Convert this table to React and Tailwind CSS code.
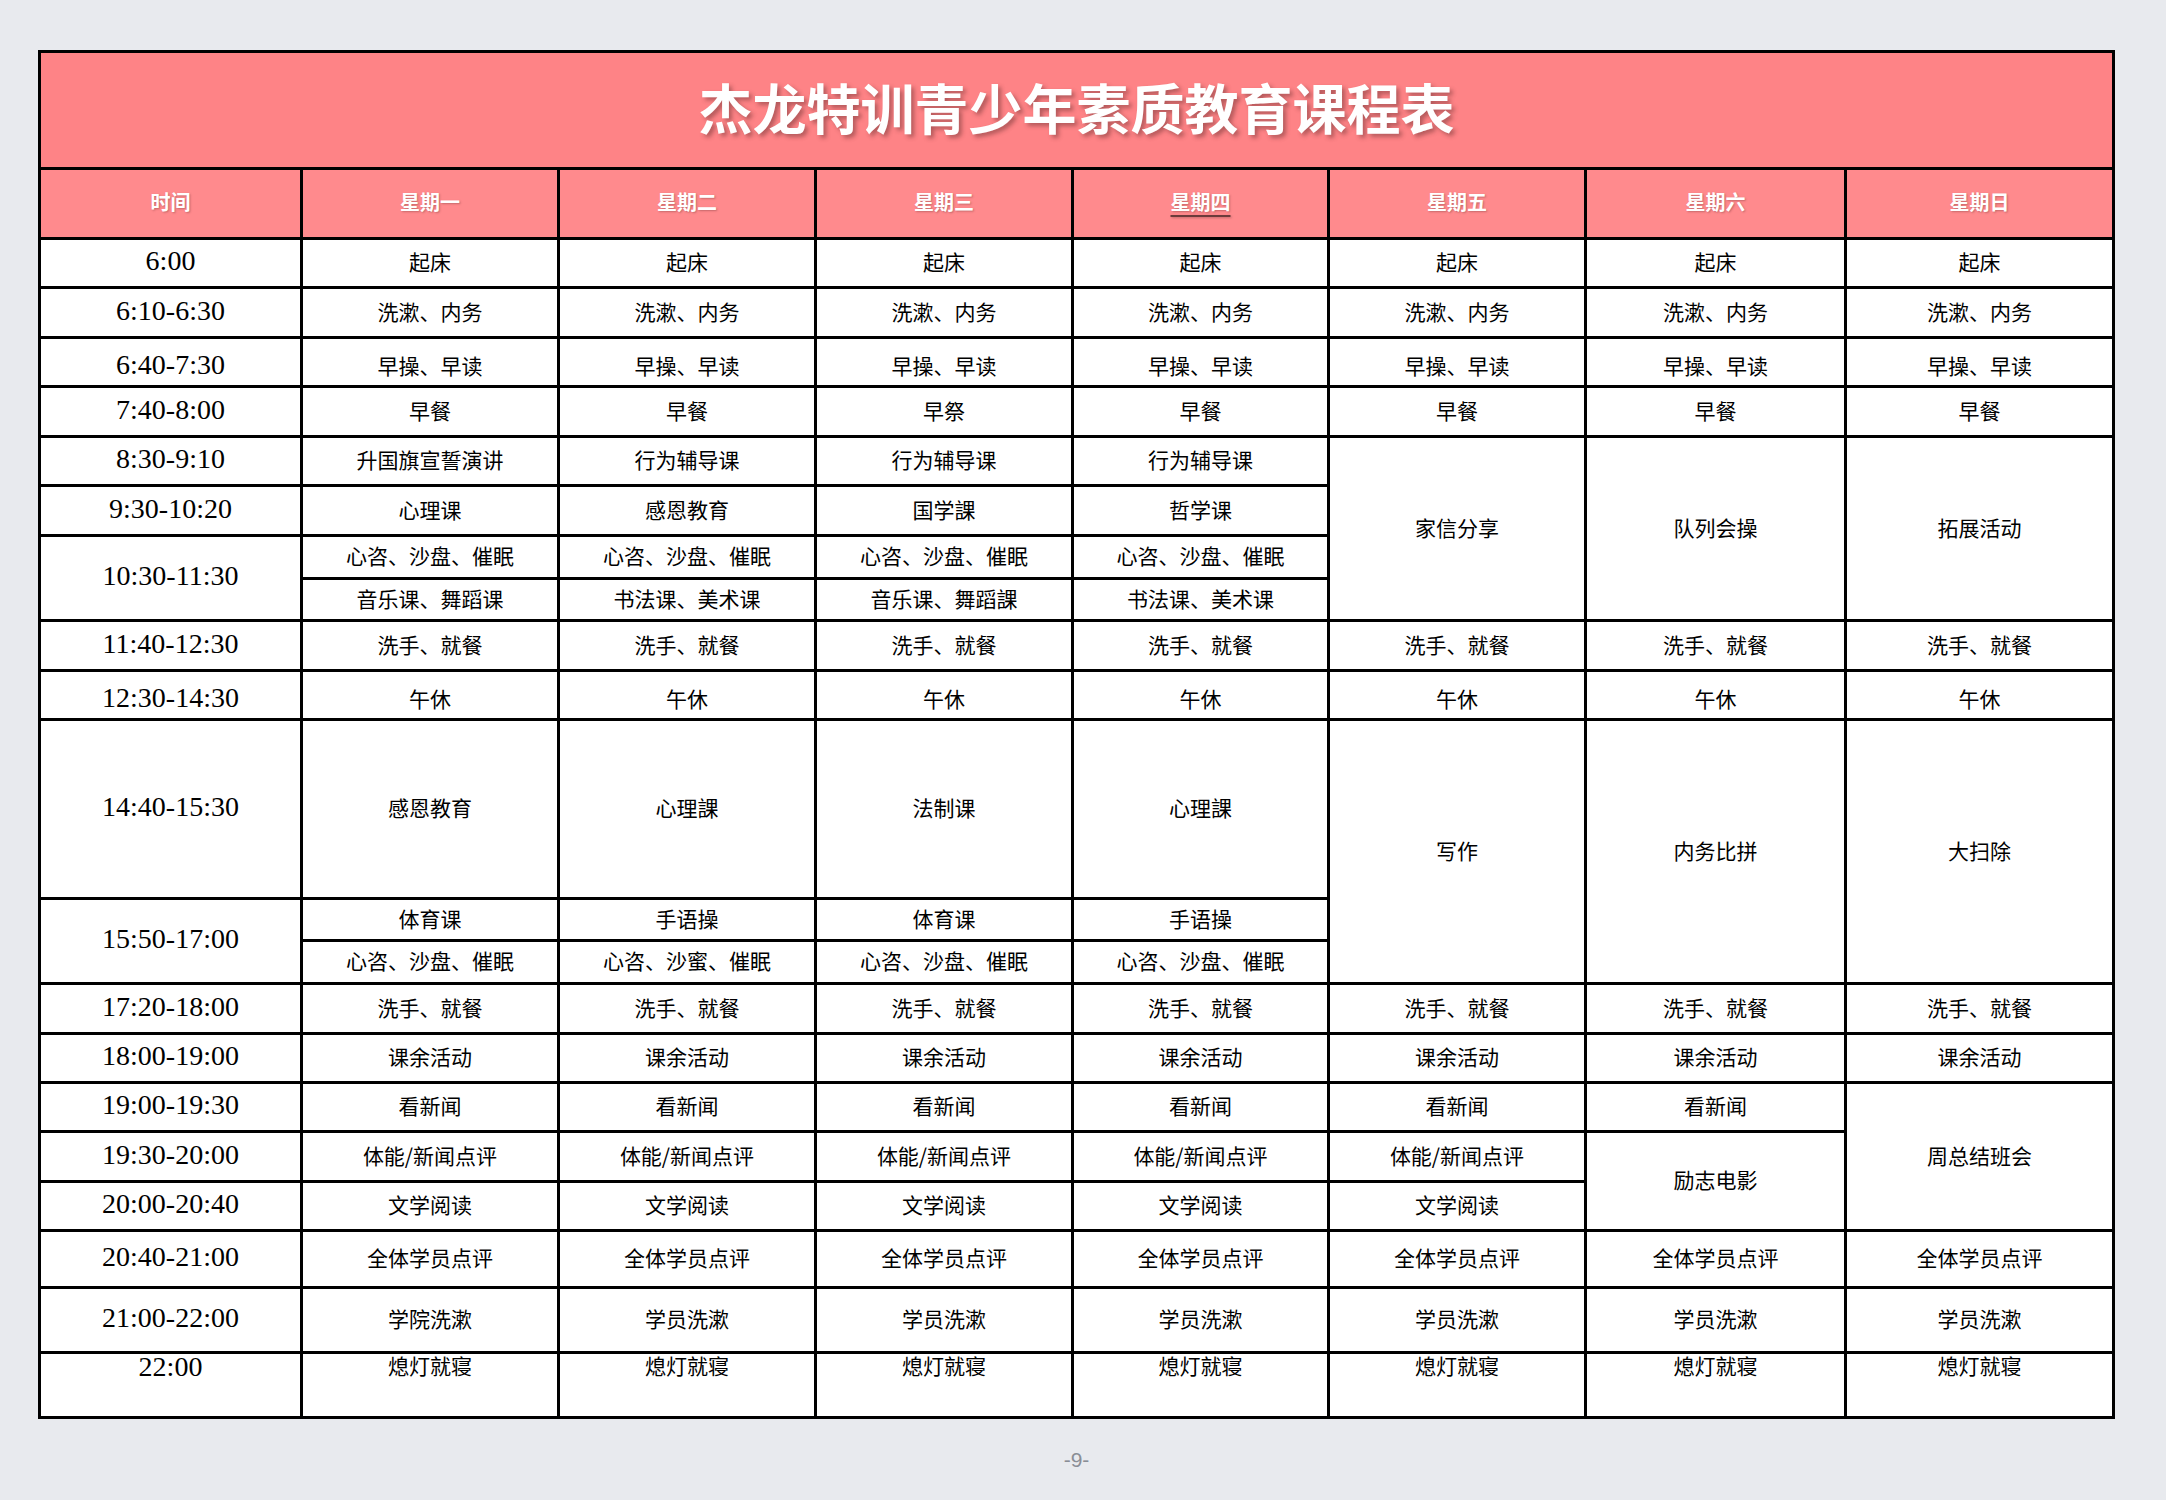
import React from "react";

const days = ["星期一", "星期二", "星期三", "星期四", "星期五", "星期六", "星期日"];

const seven = (t) => Array(7).fill(t);
const c = (text, span = "") => ({ text, span });

// row-major list for the grid; spans are filled in by auto placement
const rows = [
  { time: "6:00", cells: seven("起床") },
  { time: "6:10-6:30", cells: seven("洗漱、内务") },
  { time: "6:40-7:30", low: true, cells: seven("早操、早读") },
  { time: "7:40-8:00", cells: ["早餐", "早餐", "早祭", "早餐", "早餐", "早餐", "早餐"] },
  {
    time: "8:30-9:10",
    cells: [
      "升国旗宣誓演讲",
      "行为辅导课",
      "行为辅导课",
      "行为辅导课",
      c("家信分享", "row-span-4"),
      c("队列会操", "row-span-4"),
      c("拓展活动", "row-span-4"),
    ],
  },
  { time: "9:30-10:20", cells: ["心理课", "感恩教育", "国学課", "哲学课"] },
  { time: "10:30-11:30", timeSpan: "row-span-2", cells: Array(4).fill("心咨、沙盘、催眠") },
  { cells: ["音乐课、舞蹈课", "书法课、美术课", "音乐课、舞蹈課", "书法课、美术课"] },
  { time: "11:40-12:30", cells: seven("洗手、就餐") },
  { time: "12:30-14:30", low: true, cells: seven("午休") },
  {
    time: "14:40-15:30",
    cells: [
      "感恩教育",
      "心理課",
      "法制课",
      "心理課",
      c("写作", "row-span-3"),
      c("内务比拼", "row-span-3"),
      c("大扫除", "row-span-3"),
    ],
  },
  { time: "15:50-17:00", timeSpan: "row-span-2", cells: ["体育课", "手语操", "体育课", "手语操"] },
  { cells: ["心咨、沙盘、催眠", "心咨、沙蜜、催眠", "心咨、沙盘、催眠", "心咨、沙盘、催眠"] },
  { time: "17:20-18:00", cells: seven("洗手、就餐") },
  { time: "18:00-19:00", cells: seven("课余活动") },
  { time: "19:00-19:30", cells: [...Array(6).fill("看新闻"), c("周总结班会", "row-span-3")] },
  { time: "19:30-20:00", cells: [...Array(5).fill("体能/新闻点评"), c("励志电影", "row-span-2")] },
  { time: "20:00-20:40", cells: Array(5).fill("文学阅读") },
  { time: "20:40-21:00", cells: seven("全体学员点评") },
  { time: "21:00-22:00", cells: ["学院洗漱", ...Array(6).fill("学员洗漱")] },
  { time: "22:00", top: true, cells: seven("熄灯就寝") },
];

function Cell({ children, className = "", top, low }) {
  const align = top ? "items-start" : low ? "items-center pt-[5px]" : "items-center pb-[4px]";
  return (
    <div className={`bg-white flex justify-center text-black ${align} ${className}`}>
      {children}
    </div>
  );
}

export default function App() {
  return (
    <div className="min-h-[1500px] w-full bg-[#e8eaee] pl-[38px] pt-[50px] font-['Noto_Sans_CJK_SC',sans-serif]">
      <div className="w-[2077px] grid bg-black p-[3px] gap-[3px] grid-cols-[259px_254px_254px_254px_253px_254px_257px_265px] grid-rows-[114px_67px_46px_47px_46px_47px_46px_47px_40px_39px_47px_46px_176px_39px_40px_47px_46px_46px_47px_46px_54px_62px_62px]">
        <div className="col-span-8 bg-[#fe8386] flex items-center justify-center pb-[6px]">
          <h1 className="text-white font-bold text-[54px] leading-none [text-shadow:3px_3px_4px_rgba(90,40,40,0.45)]">
            杰龙特训青少年素质教育课程表
          </h1>
        </div>

        <div className="bg-[#ff8a8d] flex items-center justify-center pb-[4px] text-white font-bold text-[20px] [text-shadow:1px_1px_2px_rgba(90,40,40,0.35)]">
          时间
        </div>
        {days.map((d) => (
          <div
            key={d}
            className="bg-[#ff8a8d] flex items-center justify-center pb-[4px] text-white font-bold text-[20px] [text-shadow:1px_1px_2px_rgba(90,40,40,0.35)]"
          >
            <span className={d === "星期四" ? "underline decoration-[#6b3b3b] decoration-2 underline-offset-[5px]" : ""}>
              {d}
            </span>
          </div>
        ))}

        {rows.map((row, i) => (
          <React.Fragment key={i}>
            {row.time && (
              <Cell
                top={row.top}
                low={row.low}
                className={`font-['Liberation_Serif',serif] text-[28px] ${row.top ? "leading-[26px]" : "leading-[34px]"} ${row.timeSpan || ""}`}
              >
                {row.time}
              </Cell>
            )}
            {row.cells.map((cell, j) => {
              const text = typeof cell === "string" ? cell : cell.text;
              const span = typeof cell === "string" ? "" : cell.span;
              return (
                <Cell
                  key={j}
                  top={row.top}
                  low={row.low}
                  className={`text-[21px] ${row.top ? "leading-[23px]" : "leading-[30px]"} ${span}`}
                >
                  {text}
                </Cell>
              );
            })}
          </React.Fragment>
        ))}
      </div>

      <div className="w-[2077px] flex justify-center pt-[25px]">
        <span className="text-[#8a8e96] text-[21px] font-['Liberation_Sans',sans-serif]">-9-</span>
      </div>
    </div>
  );
}
